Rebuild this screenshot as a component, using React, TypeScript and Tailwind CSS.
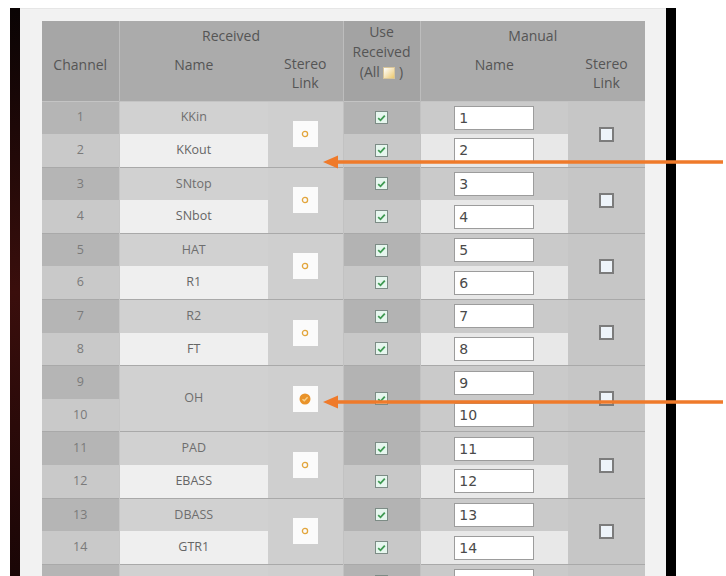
import React from 'react'

type Pair = { a: string; b: string | null; linked: boolean }

const pairs: Pair[] = [
  { a: 'KKin', b: 'KKout', linked: false },
  { a: 'SNtop', b: 'SNbot', linked: false },
  { a: 'HAT', b: 'R1', linked: false },
  { a: 'R2', b: 'FT', linked: false },
  { a: 'OH', b: null, linked: true },
  { a: 'PAD', b: 'EBASS', linked: false },
  { a: 'DBASS', b: 'GTR1', linked: false },
]

function StereoIcon({ on }: { on: boolean }) {
  return (
    <div className="mx-auto w-[25px] h-[26px] bg-[#fbfbfb] flex items-center justify-center">
      {on ? (
        <svg width="12" height="12" viewBox="0 0 12 12">
          <circle cx="6" cy="6" r="5.5" fill="#e9932a" />
          <path d="M3.5 6.2 L5.3 7.8 L8.6 4.2" stroke="#f7d08a" strokeWidth="1.4" fill="none" />
        </svg>
      ) : (
        <svg width="8" height="8" viewBox="0 0 8 8">
          <circle cx="4" cy="4" r="2.6" fill="none" stroke="#e2a53c" strokeWidth="1.3" />
        </svg>
      )}
    </div>
  )
}

function GreenCheck() {
  return (
    <div className="mx-auto w-[13px] h-[13px] border border-[#7d8c86] bg-[#e6f6ee] flex items-center justify-center">
      <svg width="9" height="8" viewBox="0 0 9 8">
        <path d="M1.2 4.2 L3.5 6.3 L7.8 1.6" stroke="#3f9a52" strokeWidth="1.8" fill="none" />
      </svg>
    </div>
  )
}

function EmptyBox() {
  return <div className="mx-auto w-[15px] h-[15px] border-2 border-[#7c7c7c] bg-[#eef4fa]" />
}

function NameInput({ value }: { value?: number }) {
  return (
    <div className="mx-auto w-[80px] h-[24px] border border-[#9c9c9c] bg-white pl-1 text-left text-[14px] leading-[22px] text-[#4a4a4a] [font-family:'DejaVu_Sans',sans-serif]">
      {value}
    </div>
  )
}

function Arrow({ top }: { top: number }) {
  return (
    <svg className="absolute left-[323px]" style={{ top: top - 8 }} width="400" height="16" viewBox="0 0 400 16">
      <line x1="12" y1="8" x2="400" y2="8" stroke="#ef7a2a" strokeWidth="3.5" />
      <polygon points="0,8 15,1.5 15,14.5" fill="#ef7a2a" />
    </svg>
  )
}

export default function App() {
  let ch = 0
  return (
    <div className="relative w-[726px] h-[576px] overflow-hidden bg-white pt-2 flex [font-family:'Open_Sans',sans-serif]">
      <div className="ml-[10px] w-[10px] bg-gradient-to-b from-[#0a0404] via-[#3a0e0c] to-[#1a0606]" />
      <div className="w-[646px] bg-[#f2f2f2] pl-[22px] pt-3 border-t border-[#e6e6e6]">
        <table className="table-fixed border-collapse w-[603px] text-center">
          <colgroup>
            <col className="w-[77px]" />
            <col className="w-[149px]" />
            <col className="w-[75px]" />
            <col className="w-[77px]" />
            <col className="w-[148px]" />
            <col className="w-[77px]" />
          </colgroup>
          <thead className="text-[14px] text-[#555] font-normal">
            <tr className="h-[30px]">
              <th rowSpan={2} className="bg-[#a6a6a6] font-normal align-top pt-[33px] border-r border-[#bdbdbd]">Channel</th>
              <th colSpan={2} className="bg-[#ababab] font-normal align-top pt-[4px]">Received</th>
              <th rowSpan={2} className="bg-[#a3a3a3] font-normal align-top pt-[1px] leading-[20px] border-x border-[#bdbdbd]">
                Use<br />Received<br />(All <span className="inline-block align-[-2px] w-[12px] h-[12px] bg-gradient-to-br from-white to-[#ecc86a] border border-[#d8c59a]" /> )
              </th>
              <th colSpan={2} className="bg-[#ababab] font-normal align-top pt-[4px]">Manual</th>
            </tr>
            <tr className="h-[50px] border-b border-[#c4c4c4]">
              <th className="bg-[#ababab] font-normal align-top pt-[3px]">Name</th>
              <th className="bg-[#ababab] font-normal align-top pt-[3px] leading-[19px]">Stereo<br />Link</th>
              <th className="bg-[#ababab] font-normal align-top pt-[3px]">Name</th>
              <th className="bg-[#ababab] font-normal align-top pt-[3px] leading-[19px]">Stereo<br />Link</th>
            </tr>
          </thead>
          <tbody className="text-[12.5px] text-[#6e6e6e]">
            {pairs.map((p, i) => {
              const n1 = ++ch
              const n2 = ++ch
              const merged = p.b === null
              return (
                <React.Fragment key={i}>
                  <tr className="h-[33.1px] border-t border-[#a9a9a9]">
                    <td className="bg-[#b5b5b5] text-[#7a7a7a] border-r border-[#c6c6c6]">{n1}</td>
                    <td rowSpan={merged ? 2 : 1} className="bg-[#d1d1d1]">{p.a}</td>
                    <td rowSpan={2} className="bg-[#cfcfcf]">
                      <StereoIcon on={p.linked} />
                    </td>
                    <td rowSpan={merged ? 2 : 1} className="bg-[#b3b3b3] border-x border-[#c2c2c2]">
                      <GreenCheck />
                    </td>
                    <td className="bg-[#cacaca]">
                      <NameInput value={n1} />
                    </td>
                    <td rowSpan={2} className="bg-[#c6c6c6]">
                      <EmptyBox />
                    </td>
                  </tr>
                  <tr className="h-[33.1px]">
                    <td className="bg-[#c9c9c9] text-[#7a7a7a] border-r border-[#c6c6c6]">{n2}</td>
                    {!merged && <td className="bg-[#efefef] text-[#666]">{p.b}</td>}
                    {!merged && (
                      <td className="bg-[#c8c8c8] border-x border-[#c2c2c2]">
                        <GreenCheck />
                      </td>
                    )}
                    <td className={merged ? 'bg-[#cacaca]' : 'bg-[#e8e8e8]'}>
                      <NameInput value={n2} />
                    </td>
                  </tr>
                </React.Fragment>
              )
            })}
            {/* next pair, only its top edge shows */}
            <tr className="h-[33.1px] border-t border-[#a9a9a9]">
              <td className="bg-[#b5b5b5] border-r border-[#c6c6c6]" />
              <td className="bg-[#d1d1d1]" />
              <td className="bg-[#cfcfcf]" />
              <td className="bg-[#b3b3b3] border-x border-[#c2c2c2]">
                <GreenCheck />
              </td>
              <td className="bg-[#cacaca]">
                <NameInput />
              </td>
              <td className="bg-[#c6c6c6]" />
            </tr>
          </tbody>
        </table>
      </div>
      <div className="w-[10px] bg-black" />
      <Arrow top={162} />
      <Arrow top={402} />
    </div>
  )
}
